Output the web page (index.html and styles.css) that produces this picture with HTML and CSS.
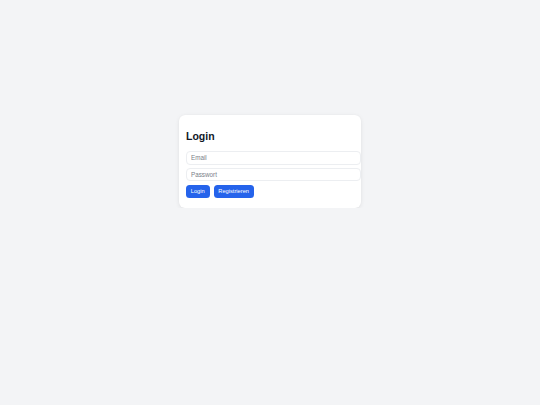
FILE: index.html
```html
<!DOCTYPE html>
<html lang="de">
<head>
<meta charset="utf-8">
<title>Login</title>
<link rel="stylesheet" href="styles.css">
</head>
<body>
<main class="page">
  <form class="card">
    <h1 class="title">Login</h1>
    <input class="field" type="email" placeholder="Email">
    <input class="field" type="password" placeholder="Passwort">
    <div class="actions">
      <button class="btn" type="button">Login</button>
      <button class="btn" type="button">Registrieren</button>
    </div>
  </form>
</main>
</body>
</html>
```
FILE: styles.css
```css
html, body {
  margin: 0;
  padding: 0;
  background: #f3f4f6;
  font-family: "Liberation Sans", Arial, sans-serif;
}
.page {
  display: flex;
  justify-content: center;
  padding-top: 115px;
}
.card {
  width: 168px;
  padding: 7px 7px 10px;
  background: #ffffff;
  border-radius: 6px;
  box-shadow: 0 1px 4px rgba(0, 0, 0, 0.08), 0 0 1px rgba(0, 0, 0, 0.05);
  display: flex;
  flex-direction: column;
}
.title {
  margin: 8px 0 9px;
  font-size: 10.5px;
  line-height: 12px;
  font-weight: 700;
  color: #111827;
}
.field {
  display: block;
  width: 175px;
  height: 13.5px;
  box-sizing: border-box;
  margin: 0 0 3px;
  padding: 0 4px;
  border: 1px solid #eceef1;
  border-radius: 4px;
  font-family: inherit;
  font-size: 6.3px;
  color: #374151;
  background: #fff;
  outline: none;
}
.field::placeholder {
  color: #7b8089;
}
.actions {
  display: flex;
  gap: 4px;
  margin-top: 1px;
}
.btn {
  height: 12.6px;
  padding: 0 4.8px;
  border: none;
  border-radius: 3.5px;
  background: #2563eb;
  color: #ffffff;
  font-family: inherit;
  font-size: 5.7px;
  line-height: 12.6px;
  cursor: pointer;
}
```
